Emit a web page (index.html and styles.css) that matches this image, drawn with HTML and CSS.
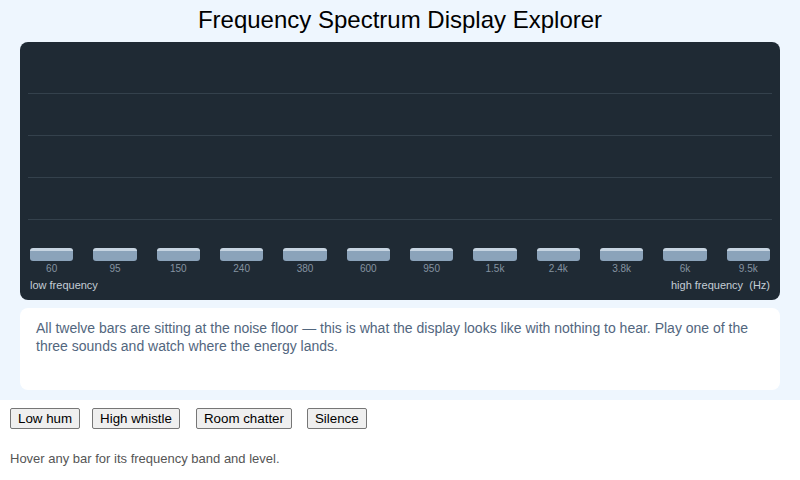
FILE: index.html
```html
<!DOCTYPE html>
<html>
<head>
<meta charset="utf-8">
<link rel="stylesheet" href="styles.css">
</head>
<body>
<div class="app">
  <h1 class="title">Frequency Spectrum Display Explorer</h1>
  <div class="panel">
    <div class="plot">
      <div class="grid">
        <div class="gl"></div><div class="gl"></div><div class="gl"></div><div class="gl"></div><div class="gl"></div>
      </div>
      <div class="bars">
        <div class="col"><div class="bar"></div></div>
        <div class="col"><div class="bar"></div></div>
        <div class="col"><div class="bar"></div></div>
        <div class="col"><div class="bar"></div></div>
        <div class="col"><div class="bar"></div></div>
        <div class="col"><div class="bar"></div></div>
        <div class="col"><div class="bar"></div></div>
        <div class="col"><div class="bar"></div></div>
        <div class="col"><div class="bar"></div></div>
        <div class="col"><div class="bar"></div></div>
        <div class="col"><div class="bar"></div></div>
        <div class="col"><div class="bar"></div></div>
      </div>
    </div>
    <div class="labels">
      <span>60</span><span>95</span><span>150</span><span>240</span><span>380</span><span>600</span><span>950</span><span>1.5k</span><span>2.4k</span><span>3.8k</span><span>6k</span><span>9.5k</span>
    </div>
    <div class="axis">
      <span>low frequency</span><span>high frequency&nbsp; (Hz)</span>
    </div>
  </div>
  <div class="card">
    All twelve bars are sitting at the noise floor — this is what the display looks like with nothing to hear. Play one of the three sounds and watch where the energy lands.
  </div>
</div>
<div class="controls">
  <button class="btn">Low hum</button>
  <button class="btn">High whistle</button>
  <button class="btn btn-mid">Room chatter</button>
  <button class="btn">Silence</button>
</div>
<p class="hint">Hover any bar for its frequency band and level.</p>
</body>
</html>
```
FILE: styles.css
```css
html, body {
  margin: 0;
  padding: 0;
  background: #ffffff;
  font-family: "Liberation Sans", Arial, sans-serif;
}
.app {
  background: #eef6fe;
  padding: 6px 20px 10px;
}
.title {
  margin: 0 0 8px;
  font-size: 24px;
  line-height: 28px;
  font-weight: 400;
  text-align: center;
  color: #000;
}
.panel {
  background: #1f2a34;
  border-radius: 8px;
  padding: 11px 8px 8px;
}
.plot {
  position: relative;
  height: 208px;
  display: flex;
  flex-direction: column;
  justify-content: flex-end;
}
.grid {
  position: absolute;
  top: -1px;
  left: 0;
  right: 0;
  bottom: 0;
  display: flex;
  flex-direction: column;
}
.gl {
  flex: 1;
  border-bottom: 1px solid #34414c;
}
.gl:last-child {
  border-bottom: none;
}
.bars {
  position: relative;
  display: flex;
  gap: 20px;
  padding: 0 2px;
}
.col {
  flex: 1;
  display: flex;
  align-items: flex-end;
}
.bar {
  width: 100%;
  height: 13px;
  border-radius: 3px;
  background: #8ba3ba;
  border-top: 3px solid #c6d4e1;
  box-sizing: border-box;
}
.labels {
  display: flex;
  gap: 20px;
  padding: 0 2px;
  margin-top: 2px;
}
.labels span {
  flex: 1;
  text-align: center;
  font-size: 10px;
  line-height: 12px;
  color: #8593a1;
}
.axis {
  display: flex;
  justify-content: space-between;
  padding: 3px 2px 0;
  font-size: 11px;
  line-height: 14px;
  color: #c4cdd6;
}
.card {
  margin-top: 8px;
  background: #ffffff;
  border-radius: 8px;
  height: 82px;
  box-sizing: border-box;
  padding: 11px 16px;
  font-size: 14px;
  line-height: 18px;
  color: #52667e;
}
.controls {
  display: flex;
  gap: 12px;
  padding: 8px 10px 0;
}
.btn {
  font-family: "Liberation Sans", Arial, sans-serif;
  font-size: 13.33px;
  height: 21px;
  padding: 1px 7px;
  background: #efefef;
  border: 1px solid #767676;
  border-radius: 2px;
  color: #000;
}
.btn-mid {
  margin-left: 4px;
}
.btn-mid + .btn {
  margin-left: 3px;
}
.hint {
  margin: 22px 10px 0;
  font-size: 13px;
  line-height: 16px;
  color: #555;
}
```
